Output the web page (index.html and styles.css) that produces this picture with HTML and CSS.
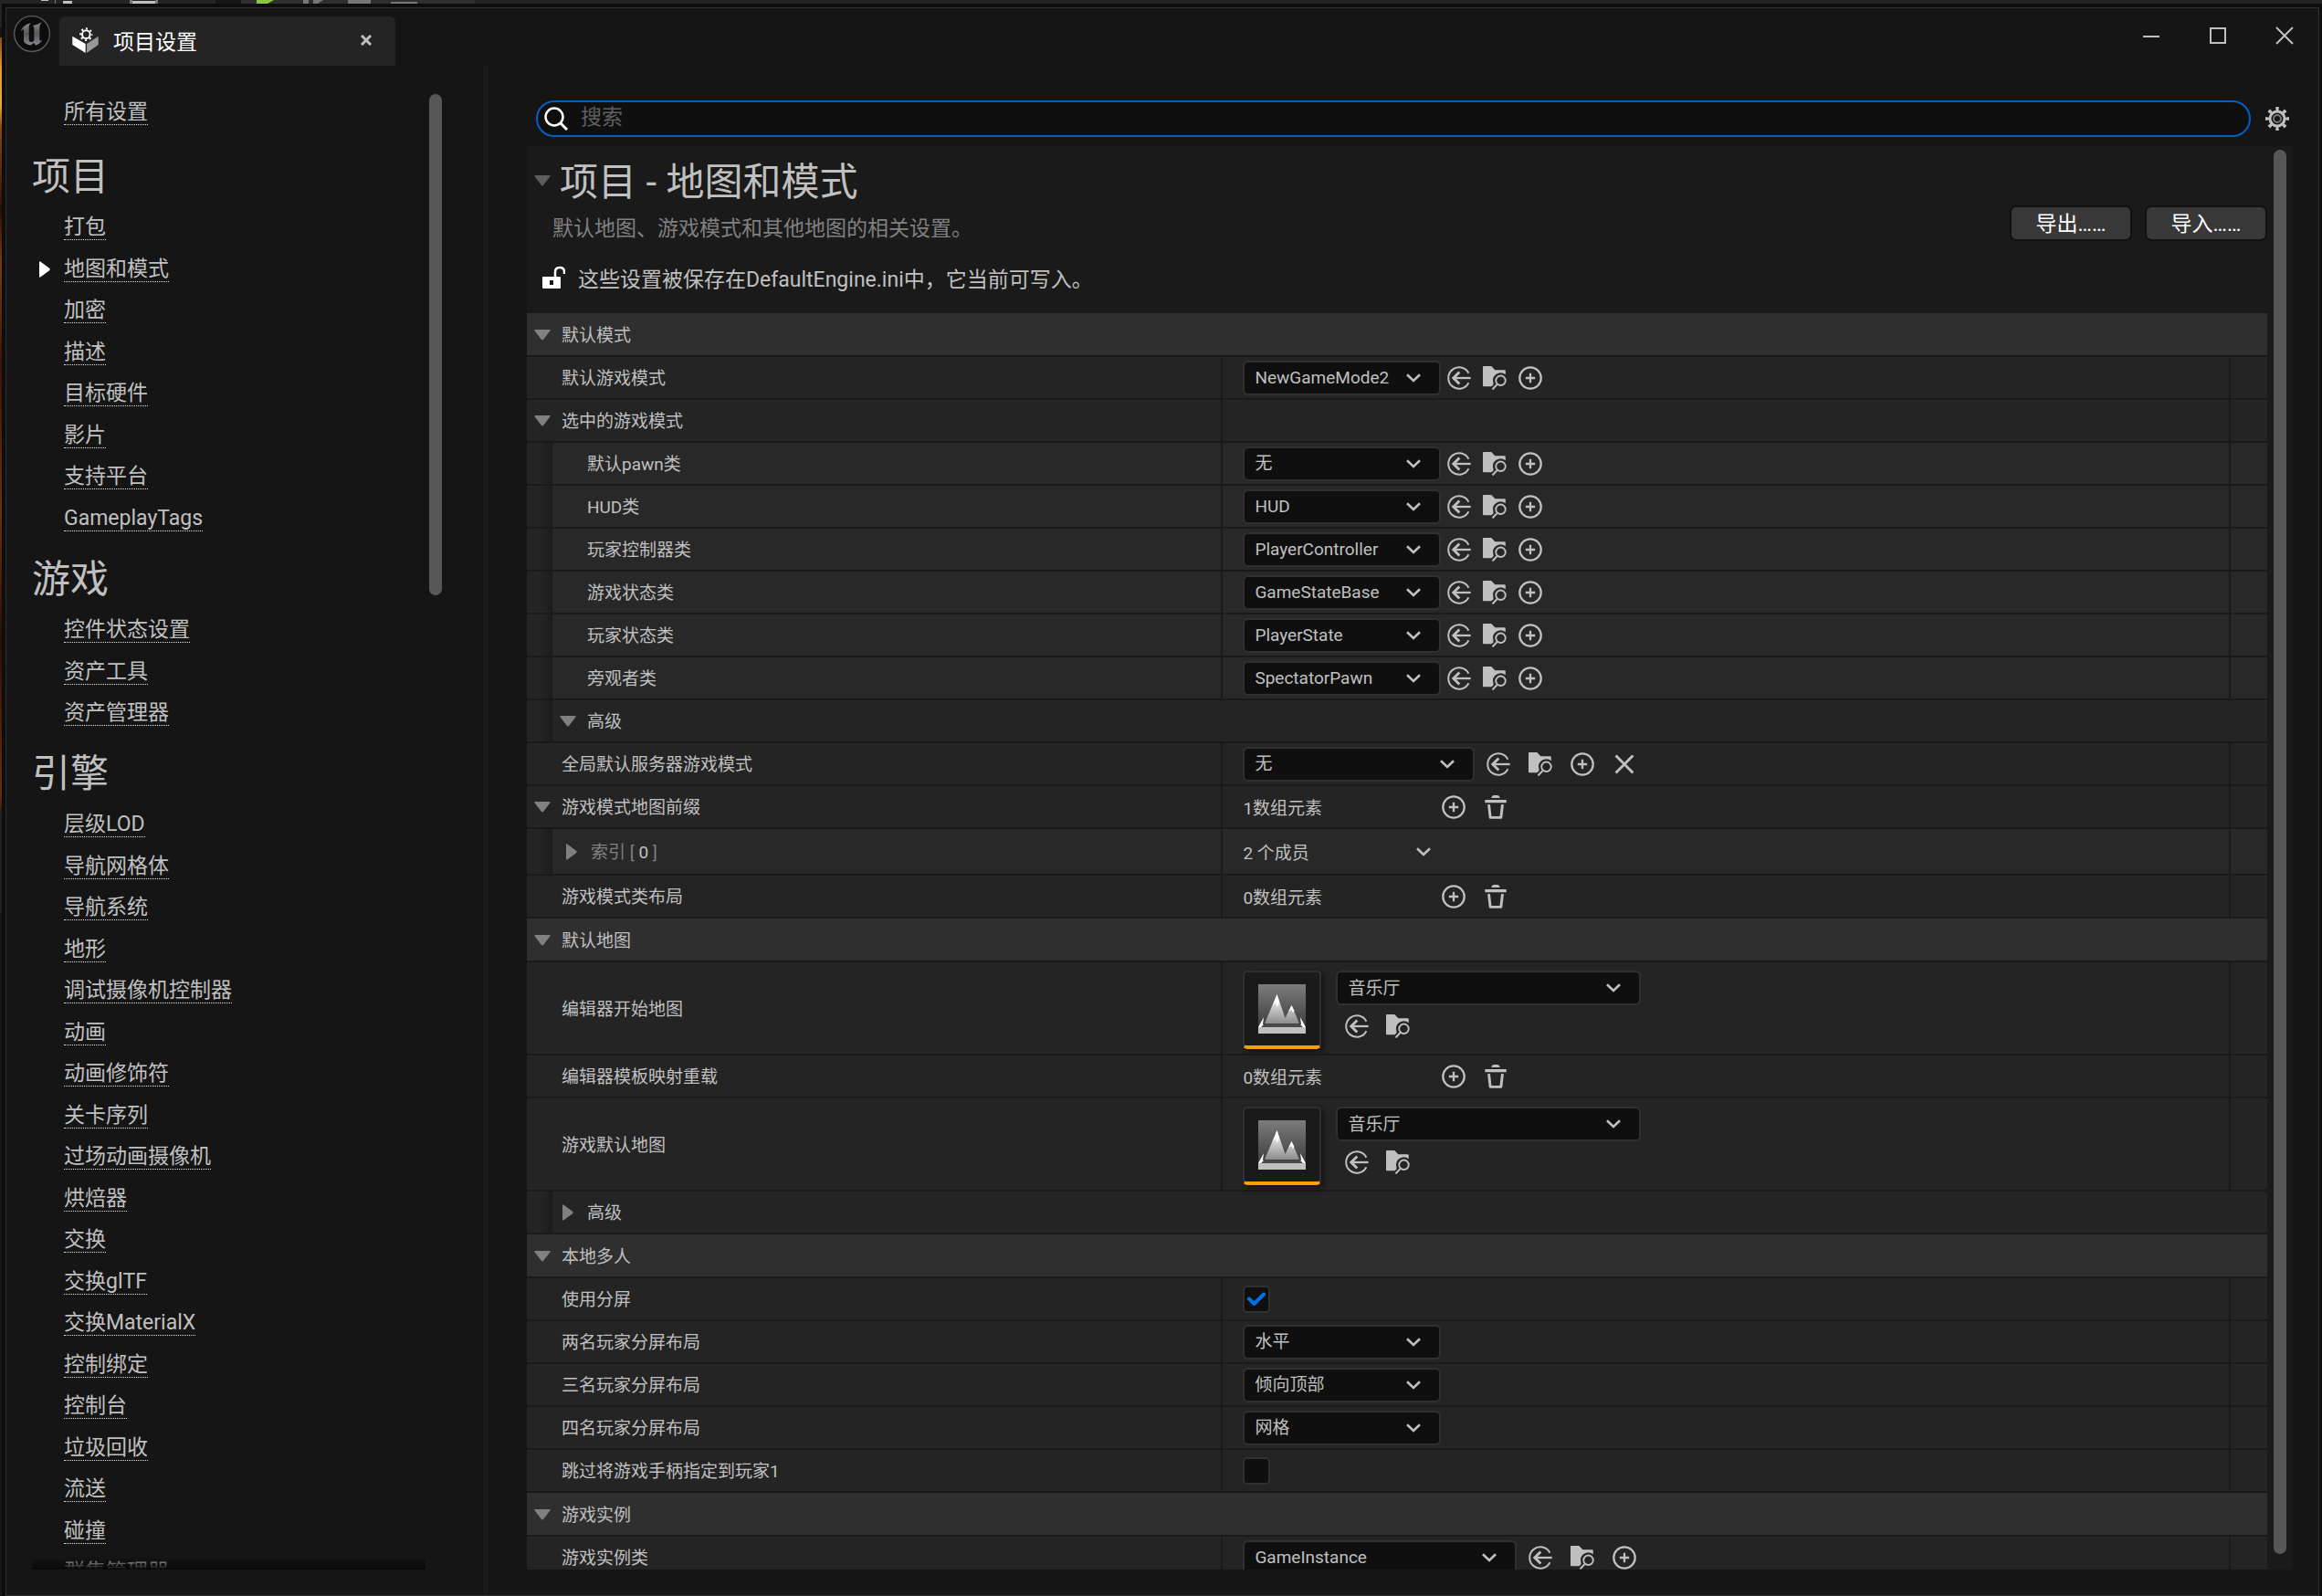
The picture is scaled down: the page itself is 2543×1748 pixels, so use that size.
FILE: index.html
```html
<!DOCTYPE html>
<html lang="zh-CN">
<head>
<meta charset="utf-8">
<title>项目设置</title>
<link rel="stylesheet" href="styles.css">
</head>
<body>
<svg class="defs" aria-hidden="true">
  <symbol id="i-reset" viewBox="0 0 80 80"><path d="M72 24A36 36 0 1 0 72 56" fill="none" stroke="currentColor" stroke-width="6"/><path d="M79 40H24" stroke="currentColor" stroke-width="7"/><path d="M41 20L21 40L41 60" fill="none" stroke="currentColor" stroke-width="9"/></symbol>
  <symbol id="i-browse" viewBox="0 0 84 84"><path d="M3 0H30L43 14H77Q80 14 80 17V30A27 27 0 0 0 37 59V66L30 72H3Q0 72 0 69V3Q0 0 3 0Z" fill="currentColor"/><circle cx="63" cy="51" r="17" fill="none" stroke="currentColor" stroke-width="6"/><path d="M50 65L34 82" stroke="currentColor" stroke-width="7"/></symbol>
  <symbol id="i-add" viewBox="0 0 80 80"><circle cx="40" cy="40" r="36" fill="none" stroke="currentColor" stroke-width="7"/><path d="M40 24V56M24 40H56" stroke="currentColor" stroke-width="7"/></symbol>
  <symbol id="i-trash" viewBox="0 0 80 80"><path d="M4 15H76V25H4ZM25 9Q28 0 34 0H46Q52 0 55 9Z" fill="currentColor"/><path d="M17 31L22 75H58L63 31" fill="none" stroke="currentColor" stroke-width="9" stroke-linejoin="round"/></symbol>
  <symbol id="i-clear" viewBox="0 0 80 80"><path d="M11 11L69 69M69 11L11 69" stroke="currentColor" stroke-width="9"/></symbol>
  <symbol id="i-chevron" viewBox="0 0 16 10"><path d="M1 1.2L8 8L15 1.2" fill="none" stroke="currentColor" stroke-width="2.6"/></symbol>
  <symbol id="i-down" viewBox="0 0 18 12"><path d="M1.5 0H16.5Q18.5 0 17.3 1.6L10.2 10.8Q9 12 7.8 10.8L.7 1.6Q-.5 0 1.5 0Z" fill="currentColor"/></symbol>
  <symbol id="i-right" viewBox="0 0 12 18"><path d="M0 1.5V16.5Q0 18.5 1.6 17.3L11 10.2Q12.4 9 11 7.8L1.6.7Q0-.5 0 1.5Z" fill="currentColor"/></symbol>
  <linearGradient id="g-sky" x2="0" y2="1"><stop offset="0" stop-color="#7c7c7c"/><stop offset="1" stop-color="#3c3c3c"/></linearGradient>
  <linearGradient id="g-peak" x2="0" y2="1"><stop offset="0" stop-color="#ffffff"/><stop offset="1" stop-color="#8c8c8c"/></linearGradient>
  <linearGradient id="g-u" x2="0" y2="1"><stop offset="0" stop-color="#8a8c8e"/><stop offset=".5" stop-color="#55585a"/><stop offset="1" stop-color="#85878a"/></linearGradient>
  <symbol id="i-level" viewBox="0 0 52 54"><path d="M0 0H52V47H0Z" fill="url(#g-sky)"/><path d="M7 43L20.500 11L29.500 37L36.500 23L45 43Z" fill="url(#g-peak)"/><path d="M20.500 11L16 23L19 20L21 25L23 19ZM36.500 23L33 30L36 28L38 31L39.500 29ZM0 47L6 36L5 44H47L46 36L52 47Z" fill="#fff"/><path d="M6 44H46L49 47H3Z" fill="#4a4a4a"/><path d="M0 47H52V54H0Z" fill="#c0c0c0"/></symbol>
</svg>

<svg class="backdrop-top" width="520" height="4" viewBox="0 0 520 4" aria-hidden="true"><path d="M236 0H520V4H236Z" fill="#2f2f2f"/><path d="M0 0H236V4H0Z" fill="#242424"/><path d="M236 0H264V4H236Z" fill="#161616"/><path d="M45 0H53V1H45ZM69 1H79V4H69ZM145 1H170V4H145Z" fill="#c0c0c0"/><path d="M60 0H61V4H60ZM142 0H145V4H142ZM170 0H173V4H170ZM332 0H338V4H332ZM343 0H354L348 4H343ZM381 0H406V4H381ZM428 2H457V4H428Z" fill="#777"/><path d="M281 0H300L293 4H281Z" fill="#8bc63e"/></svg>

<div class="window">
  <header class="titlebar">
    <svg class="logo" viewBox="0 0 120 120" aria-label="Unreal"><circle cx="60" cy="60" r="58" fill="#0c0c0c" stroke="#5c5e60" stroke-width="4"/><path d="M23 52C28 38 40 27 58 25C52 29 50 33 50 38V78C50 84 53 87 58 87C62 87 65 85 67 82V42C67 37 65 35 61 34C72 31 84 28 92 22C87 29 85 33 85 40V78C85 83 88 84 94 80C88 90 80 95 73 98L66 90C60 96 54 99 48 96C38 93 32 88 33 78V48C33 43 29 46 23 52Z" fill="url(#g-u)"/></svg>
    <div class="tab">
      <svg class="tab-icon" viewBox="0 0 85 84" aria-hidden="true"><path d="M0 29L43 54V84L0 57Z" fill="#fff"/><path d="M47 54L85 29V57L47 84Z" fill="#999"/><circle cx="45" cy="23" r="13" fill="none" stroke="#fff" stroke-width="6"/><circle cx="45" cy="23" r="19" fill="none" stroke="#fff" stroke-width="6" pathLength="80" stroke-dasharray="4 6" stroke-dashoffset="2"/></svg>
      <span>项目设置</span>
      <button class="tab-close" aria-label="关闭标签"><svg width="12" height="12" viewBox="0 0 12 12"><path d="M1 1L11 11M11 1L1 11" stroke="currentColor" stroke-width="3"/></svg></button>
    </div>
    <div class="window-buttons">
      <button aria-label="最小化"><svg width="20" height="20" viewBox="0 0 20 20"><path d="M1 11H19" stroke="currentColor" stroke-width="2"/></svg></button>
      <button aria-label="最大化"><svg width="20" height="20" viewBox="0 0 20 20"><path d="M2 2H18V18H2Z" fill="none" stroke="currentColor" stroke-width="2"/></svg></button>
      <button aria-label="关闭"><svg width="20" height="20" viewBox="0 0 20 20"><path d="M1 1L19 19M19 1L1 19" stroke="currentColor" stroke-width="2"/></svg></button>
    </div>
  </header>

  <div class="body">
    <nav class="sidebar">
      <div class="nav-list">
        <ul class="all"><li><a href="#">所有设置</a></li></ul>
        <h2>项目</h2>
        <ul>
          <li><a href="#">打包</a></li>
          <li class="current"><svg class="marker" width="12" height="18"><use href="#i-right"/></svg><a href="#">地图和模式</a></li>
          <li><a href="#">加密</a></li>
          <li><a href="#">描述</a></li>
          <li><a href="#">目标硬件</a></li>
          <li><a href="#">影片</a></li>
          <li><a href="#">支持平台</a></li>
          <li><a href="#">GameplayTags</a></li>
        </ul>
        <h2>游戏</h2>
        <ul>
          <li><a href="#">控件状态设置</a></li>
          <li><a href="#">资产工具</a></li>
          <li><a href="#">资产管理器</a></li>
        </ul>
        <h2>引擎</h2>
        <ul>
          <li><a href="#">层级LOD</a></li>
          <li><a href="#">导航网格体</a></li>
          <li><a href="#">导航系统</a></li>
          <li><a href="#">地形</a></li>
          <li><a href="#">调试摄像机控制器</a></li>
          <li><a href="#">动画</a></li>
          <li><a href="#">动画修饰符</a></li>
          <li><a href="#">关卡序列</a></li>
          <li><a href="#">过场动画摄像机</a></li>
          <li><a href="#">烘焙器</a></li>
          <li><a href="#">交换</a></li>
          <li><a href="#">交换glTF</a></li>
          <li><a href="#">交换MaterialX</a></li>
          <li><a href="#">控制绑定</a></li>
          <li><a href="#">控制台</a></li>
          <li><a href="#">垃圾回收</a></li>
          <li><a href="#">流送</a></li>
          <li><a href="#">碰撞</a></li>
          <li><a href="#">群集管理器</a></li>
        </ul>
      </div>
      <div class="scroll-thumb"></div>
    </nav>
    <div class="splitter"></div>

    <main class="main">
      <div class="search-row">
        <div class="search">
          <svg width="26" height="26" viewBox="0 0 26 26" aria-hidden="true"><circle cx="11" cy="11" r="9.500" fill="none" stroke="#fff" stroke-width="2.500"/><path d="M18 18L25 25" stroke="#fff" stroke-width="3"/></svg>
          <input type="text" placeholder="搜索" aria-label="搜索">
        </div>
        <button class="gear" aria-label="设置"><svg width="26" height="26" viewBox="0 0 26 26"><circle cx="13" cy="13" r="8" fill="none" stroke="currentColor" stroke-width="3"/><circle cx="13" cy="13" r="11" fill="none" stroke="currentColor" stroke-width="4" pathLength="80" stroke-dasharray="4 6" stroke-dashoffset="2"/><circle cx="13" cy="13" r="4" fill="none" stroke="#777" stroke-width="2"/></svg></button>
      </div>

      <div class="panel">
        <div class="content">
          <section class="intro">
            <div class="intro-text">
              <h1><button class="toggle dim" aria-label="折叠"><svg width="18" height="12"><use href="#i-down"/></svg></button>项目 - 地图和模式</h1>
              <p class="desc">默认地图、游戏模式和其他地图的相关设置。</p>
              <p class="save"><svg width="25" height="26" viewBox="0 0 25 26" aria-hidden="true"><path d="M1 12H19Q20 12 20 13V24Q20 25 19 25H2Q0 25 0 24V13Q0 12 1 12ZM8 16V21H12V16Z" fill="#fff" fill-rule="evenodd"/><path d="M14 13V7Q14 2 19 2T24 7V9" fill="none" stroke="#fff" stroke-width="2.500"/></svg>这些设置被保存在DefaultEngine.ini中，它当前可写入。</p>
            </div>
            <div class="intro-actions">
              <button class="btn">导出……</button>
              <button class="btn">导入……</button>
            </div>
          </section>

          <h3 class="category"><button class="toggle" aria-label="折叠"><svg width="18" height="12"><use href="#i-down"/></svg></button>默认模式</h3>
          <div class="row">
            <label class="name" for="f1">默认游戏模式</label>
            <div class="value tight"><span class="combo"><select id="f1"><option>NewGameMode2</option></select><svg><use href="#i-chevron"/></svg></span><button aria-label="使用选中"><svg><use href="#i-reset"/></svg></button><button aria-label="浏览"><svg><use href="#i-browse"/></svg></button><button aria-label="新建"><svg><use href="#i-add"/></svg></button></div>
            <div class="tail"></div>
          </div>
          <div class="row">
            <div class="name"><button class="toggle" aria-label="折叠"><svg width="18" height="12"><use href="#i-down"/></svg></button>选中的游戏模式</div>
            <div class="value"></div>
            <div class="tail"></div>
          </div>
          <div class="row nested">
            <label class="name" for="f2">默认pawn类</label>
            <div class="value tight"><span class="combo"><select id="f2"><option>无</option></select><svg><use href="#i-chevron"/></svg></span><button aria-label="使用选中"><svg><use href="#i-reset"/></svg></button><button aria-label="浏览"><svg><use href="#i-browse"/></svg></button><button aria-label="新建"><svg><use href="#i-add"/></svg></button></div>
            <div class="tail"></div>
          </div>
          <div class="row nested">
            <label class="name" for="f3">HUD类</label>
            <div class="value tight"><span class="combo"><select id="f3"><option>HUD</option></select><svg><use href="#i-chevron"/></svg></span><button aria-label="使用选中"><svg><use href="#i-reset"/></svg></button><button aria-label="浏览"><svg><use href="#i-browse"/></svg></button><button aria-label="新建"><svg><use href="#i-add"/></svg></button></div>
            <div class="tail"></div>
          </div>
          <div class="row nested">
            <label class="name" for="f4">玩家控制器类</label>
            <div class="value tight"><span class="combo"><select id="f4"><option>PlayerController</option></select><svg><use href="#i-chevron"/></svg></span><button aria-label="使用选中"><svg><use href="#i-reset"/></svg></button><button aria-label="浏览"><svg><use href="#i-browse"/></svg></button><button aria-label="新建"><svg><use href="#i-add"/></svg></button></div>
            <div class="tail"></div>
          </div>
          <div class="row nested">
            <label class="name" for="f5">游戏状态类</label>
            <div class="value tight"><span class="combo"><select id="f5"><option>GameStateBase</option></select><svg><use href="#i-chevron"/></svg></span><button aria-label="使用选中"><svg><use href="#i-reset"/></svg></button><button aria-label="浏览"><svg><use href="#i-browse"/></svg></button><button aria-label="新建"><svg><use href="#i-add"/></svg></button></div>
            <div class="tail"></div>
          </div>
          <div class="row nested">
            <label class="name" for="f6">玩家状态类</label>
            <div class="value tight"><span class="combo"><select id="f6"><option>PlayerState</option></select><svg><use href="#i-chevron"/></svg></span><button aria-label="使用选中"><svg><use href="#i-reset"/></svg></button><button aria-label="浏览"><svg><use href="#i-browse"/></svg></button><button aria-label="新建"><svg><use href="#i-add"/></svg></button></div>
            <div class="tail"></div>
          </div>
          <div class="row nested">
            <label class="name" for="f7">旁观者类</label>
            <div class="value tight"><span class="combo"><select id="f7"><option>SpectatorPawn</option></select><svg><use href="#i-chevron"/></svg></span><button aria-label="使用选中"><svg><use href="#i-reset"/></svg></button><button aria-label="浏览"><svg><use href="#i-browse"/></svg></button><button aria-label="新建"><svg><use href="#i-add"/></svg></button></div>
            <div class="tail"></div>
          </div>
          <div class="row nested advanced">
            <div class="name"><button class="toggle" aria-label="折叠"><svg width="18" height="12"><use href="#i-down"/></svg></button>高级</div>
          </div>
          <div class="row">
            <label class="name" for="f8">全局默认服务器游戏模式</label>
            <div class="value"><span class="combo medium"><select id="f8"><option>无</option></select><svg><use href="#i-chevron"/></svg></span><button aria-label="使用选中"><svg><use href="#i-reset"/></svg></button><button aria-label="浏览"><svg><use href="#i-browse"/></svg></button><button aria-label="新建"><svg><use href="#i-add"/></svg></button><button aria-label="清除"><svg><use href="#i-clear"/></svg></button></div>
            <div class="tail"></div>
          </div>
          <div class="row">
            <div class="name"><button class="toggle" aria-label="折叠"><svg width="18" height="12"><use href="#i-down"/></svg></button>游戏模式地图前缀</div>
            <div class="value"><span class="count">1数组元素</span><button aria-label="添加"><svg><use href="#i-add"/></svg></button><button aria-label="清空"><svg><use href="#i-trash"/></svg></button></div>
            <div class="tail"></div>
          </div>
          <div class="row nested tall">
            <div class="name index"><button class="toggle" aria-label="展开"><svg width="12" height="18"><use href="#i-right"/></svg></button><span>索引 [ <b>0</b> ]</span></div>
            <div class="value"><span class="members">2 个成员</span><button class="more" aria-label="更多"><svg><use href="#i-chevron"/></svg></button></div>
            <div class="tail"></div>
          </div>
          <div class="row">
            <div class="name">游戏模式类布局</div>
            <div class="value"><span class="count">0数组元素</span><button aria-label="添加"><svg><use href="#i-add"/></svg></button><button aria-label="清空"><svg><use href="#i-trash"/></svg></button></div>
            <div class="tail"></div>
          </div>

          <h3 class="category"><button class="toggle" aria-label="折叠"><svg width="18" height="12"><use href="#i-down"/></svg></button>默认地图</h3>
          <div class="row asset-row">
            <label class="name" for="f9">编辑器开始地图</label>
            <div class="value"><span class="thumb"><svg width="52" height="54"><use href="#i-level"/></svg></span><div class="asset"><span class="combo wide"><select id="f9"><option>音乐厅</option></select><svg><use href="#i-chevron"/></svg></span><div class="asset-actions"><button aria-label="使用选中"><svg><use href="#i-reset"/></svg></button><button aria-label="浏览"><svg><use href="#i-browse"/></svg></button></div></div></div>
            <div class="tail"></div>
          </div>
          <div class="row">
            <div class="name">编辑器模板映射重载</div>
            <div class="value"><span class="count">0数组元素</span><button aria-label="添加"><svg><use href="#i-add"/></svg></button><button aria-label="清空"><svg><use href="#i-trash"/></svg></button></div>
            <div class="tail"></div>
          </div>
          <div class="row asset-row">
            <label class="name" for="f10">游戏默认地图</label>
            <div class="value"><span class="thumb"><svg width="52" height="54"><use href="#i-level"/></svg></span><div class="asset"><span class="combo wide"><select id="f10"><option>音乐厅</option></select><svg><use href="#i-chevron"/></svg></span><div class="asset-actions"><button aria-label="使用选中"><svg><use href="#i-reset"/></svg></button><button aria-label="浏览"><svg><use href="#i-browse"/></svg></button></div></div></div>
            <div class="tail"></div>
          </div>
          <div class="row nested advanced">
            <div class="name"><button class="toggle" aria-label="展开"><svg width="18" height="18"><use href="#i-right"/></svg></button>高级</div>
          </div>

          <h3 class="category"><button class="toggle" aria-label="折叠"><svg width="18" height="12"><use href="#i-down"/></svg></button>本地多人</h3>
          <div class="row">
            <label class="name" for="f11">使用分屏</label>
            <div class="value"><span class="check"><input type="checkbox" id="f11" checked><svg width="20" height="16" viewBox="0 0 20 16"><path d="M2 7.500L7.500 13L18 2.500" fill="none" stroke="#0070e0" stroke-width="4" stroke-linecap="round" stroke-linejoin="round"/></svg></span></div>
            <div class="tail"></div>
          </div>
          <div class="row">
            <label class="name" for="f12">两名玩家分屏布局</label>
            <div class="value"><span class="combo"><select id="f12"><option>水平</option></select><svg><use href="#i-chevron"/></svg></span></div>
            <div class="tail"></div>
          </div>
          <div class="row">
            <label class="name" for="f13">三名玩家分屏布局</label>
            <div class="value"><span class="combo"><select id="f13"><option>倾向顶部</option></select><svg><use href="#i-chevron"/></svg></span></div>
            <div class="tail"></div>
          </div>
          <div class="row">
            <label class="name" for="f14">四名玩家分屏布局</label>
            <div class="value"><span class="combo"><select id="f14"><option>网格</option></select><svg><use href="#i-chevron"/></svg></span></div>
            <div class="tail"></div>
          </div>
          <div class="row">
            <label class="name" for="f15">跳过将游戏手柄指定到玩家1</label>
            <div class="value"><span class="check"><input type="checkbox" id="f15"></span></div>
            <div class="tail"></div>
          </div>

          <h3 class="category"><button class="toggle" aria-label="折叠"><svg width="18" height="12"><use href="#i-down"/></svg></button>游戏实例</h3>
          <div class="row">
            <label class="name" for="f16">游戏实例类</label>
            <div class="value"><span class="combo large"><select id="f16"><option>GameInstance</option></select><svg><use href="#i-chevron"/></svg></span><button aria-label="使用选中"><svg><use href="#i-reset"/></svg></button><button aria-label="浏览"><svg><use href="#i-browse"/></svg></button><button aria-label="新建"><svg><use href="#i-add"/></svg></button></div>
            <div class="tail"></div>
          </div>
        </div>
        <div class="scroll-track"><div class="scroll-thumb"></div></div>
      </div>
    </main>
  </div>
</div>
</body>
</html>
```
FILE: styles.css
```css
* {
  box-sizing: border-box;
}

html {
  height: 100%;
}

body {
  height: 100%;
  margin: 0;
  padding: 4px 0 0 2px;
  overflow: hidden;
  background: linear-gradient(#242424 0 30px, #141414 30px 41px, #8a4a14 41px, #e09a30 75px, #e8a840 115px, #8a4510 140px, #2c1004 230px, #7a3a0c 290px, #3a1404 400px, #6a300a 560px, #2a1006 700px, #6a2c0a 870px, #202020 890px 1000px, #161616 1000px);
  color: #c0c0c0;
  font-family: Roboto, "Noto Sans CJK SC", sans-serif;
  font-size: 19px;
}

button {
  display: flex;
  align-items: center;
  justify-content: center;
  margin: 0;
  padding: 0;
  border: 0;
  background: none;
  color: inherit;
  font: inherit;
}

.defs {
  position: absolute;
  width: 0;
  height: 0;
}

.backdrop-top {
  position: absolute;
  top: 0;
  left: 0;
}

/* Window frame */
.window {
  display: flex;
  flex-direction: column;
  height: 100%;
  border: solid #0d0d0d;
  border-width: 4px 3px 0 4px;
  background: #151515;
  box-shadow: inset 0 0 0 1px #303030;
}

.titlebar {
  display: flex;
  align-items: flex-start;
  height: 64px;
  padding: 9px 28px 0 9px;
}

.logo {
  width: 40px;
  height: 40px;
}

.tab {
  display: flex;
  align-items: center;
  gap: 16px;
  width: 368px;
  height: 54px;
  margin: 1px 0 0 10px;
  padding: 0 26px 2px 14px;
  border-radius: 6px 6px 0 0;
  background: #242424;
  color: #fff;
  font-size: 23px;
}

.tab-icon {
  width: 29px;
  height: 28px;
}

.tab-close {
  margin-left: auto;
  color: #c0c0c0;
}

.window-buttons {
  display: flex;
  gap: 53px;
  margin: 12px 0 0 auto;
}

.body {
  display: flex;
  flex: 1;
  min-height: 0;
  padding-bottom: 1px;
}

/* Category navigation */
.sidebar {
  position: relative;
  display: flex;
  width: 523px;
  padding: 31px 45px 28px 29px;
}

.nav-list {
  flex: 1;
  margin-top: -2px;
  overflow: hidden;
}

.sidebar::after {
  content: "";
  position: absolute;
  left: 29px;
  right: 63px;
  bottom: 28px;
  height: 14px;
  background: linear-gradient(transparent, #080808);
}

.nav-list ul {
  margin: 0;
  padding: 0 0 0 35px;
  list-style: none;
}

.nav-list .all {
  margin-bottom: 4px;
}

.nav-list li {
  position: relative;
  display: flex;
  align-items: center;
  height: 45px;
}

.nav-list li:nth-child(even) {
  height: 46px;
}

.nav-list a {
  border-bottom: 1px dotted #e0e0e0;
  color: inherit;
  font-size: 23px;
  line-height: 26px;
  text-decoration: none;
}

.marker {
  position: absolute;
  left: -27px;
  color: #fff;
}

.nav-list h2 {
  height: 77px;
  margin: 0;
  font-size: 42px;
  font-weight: 400;
  line-height: 88px;
}

.scroll-thumb {
  width: 14px;
  border-radius: 7px;
  background: #575757;
}

.sidebar .scroll-thumb {
  height: 34%;
}

.splitter {
  width: 6px;
  background: #1a1a1a;
}

/* Search */
.main {
  display: flex;
  flex: 1;
  flex-direction: column;
  min-width: 0;
  padding: 38px 29px 28px 42px;
}

.search-row {
  display: flex;
  align-items: center;
  gap: 16px;
  height: 40px;
  margin: 0 4px 10px 10px;
}

.search {
  display: flex;
  flex: 1;
  align-items: center;
  gap: 14px;
  height: 40px;
  padding: 0 7px;
  border: 2px solid #0060c4;
  border-radius: 20px;
  background: #0f0f0f;
}

.search input {
  flex: 1;
  padding: 0 0 3px;
  border: 0;
  outline: 0;
  background: none;
  color: #c0c0c0;
  font: inherit;
  font-size: 23px;
}

.search input::placeholder {
  color: #606060;
  opacity: 1;
}

/* Details panel */
.panel {
  display: flex;
  flex: 1;
  min-height: 0;
  background: #1a1a1a;
}

.content {
  flex: 1;
  overflow: hidden;
}

.scroll-track {
  display: flex;
  width: 28px;
  padding: 4px 7px 17px;
}

.intro {
  display: flex;
  align-items: flex-start;
  justify-content: space-between;
  height: 183px;
}

.intro h1 {
  display: flex;
  align-items: center;
  gap: 10px;
  height: 48px;
  margin: 11px 0 0 8px;
  font-size: 42px;
  font-weight: 400;
}

.intro h1 .toggle {
  padding-top: 6px;
}

.intro p {
  display: flex;
  align-items: center;
  height: 30px;
  margin: 0;
  font-size: 23px;
}

.intro .desc {
  margin: 14px 0 26px 28px;
  color: #808080;
}

.intro .save {
  margin-left: 17px;
}

.save svg {
  margin-right: 14px;
}

.intro-actions {
  display: flex;
  gap: 14px;
  padding-top: 65px;
}

.btn {
  width: 134px;
  height: 39px;
  padding-bottom: 3px;
  border: 2px solid #111;
  border-radius: 7px;
  background: #383838;
  color: #fff;
  font-size: 23px;
}

.category {
  display: flex;
  align-items: center;
  gap: 12px;
  height: 48px;
  margin: 0;
  padding: 0 0 2px 8px;
  border-bottom: 2px solid #1a1a1a;
  background: #2f2f2f;
  font-size: 19px;
  font-weight: 400;
}

.toggle {
  padding-top: 3px;
  color: #808080;
}

.toggle.dim {
  color: #5c5c5c;
}

.row {
  display: grid;
  grid-template-columns: 40% 1fr 40px;
  height: 47px;
  border-bottom: 2px solid #1a1a1a;
  background: #242424;
}

.row.nested {
  background: linear-gradient(to right, #242424 17px, #1b1b1b 28px, #282828 28px);
}

.row.advanced {
  grid-template-columns: 1fr;
  background: linear-gradient(to right, #242424 17px, #1b1b1b 28px, #242424 28px);
}

.row.tall {
  height: 51px;
}

.row.asset-row {
  height: 102px;
}

.name {
  display: flex;
  align-items: center;
  gap: 12px;
  padding: 0 0 2px 38px;
  border-right: 2px solid #1a1a1a;
}

.name:has(.toggle) {
  padding-left: 8px;
}

.nested .name {
  padding-left: 66px;
}

.nested .name:has(.toggle) {
  padding-left: 36px;
}

.advanced .name {
  border-right: 0;
}

.nested .index:has(.toggle) {
  gap: 15px;
  padding-left: 43px;
  color: #808080;
}

.index b {
  color: #c0c0c0;
  font-weight: 400;
}

.value {
  display: flex;
  align-items: center;
  gap: 20px;
  padding-left: 22px;
  border-right: 2px solid #1a1a1a;
}

.value.tight {
  gap: 13px;
}

.value button svg {
  width: 26px;
  height: 26px;
}

.value .combo + button {
  margin-left: -7px;
}

.value.tight .combo + button {
  margin-left: -6px;
}

.combo {
  display: grid;
  align-items: center;
  width: 217px;
  height: 38px;
}

.combo.medium {
  width: 254px;
}

.combo.large {
  width: 300px;
}

.combo.wide {
  width: 334px;
}

.combo > * {
  grid-area: 1 / 1;
}

.combo select {
  width: 100%;
  height: 38px;
  padding: 0 40px 0 11px;
  border: 2px solid #303030;
  border-radius: 6px;
  appearance: none;
  background: #0f0f0f;
  color: #c0c0c0;
  font: inherit;
}

.combo svg {
  justify-self: end;
  width: 16px;
  height: 10px;
  margin-right: 22px;
  pointer-events: none;
}

.count {
  width: 198px;
}

.members {
  width: 170px;
}

.value .more svg {
  width: 16px;
  height: 10px;
}

.asset-row .value {
  align-items: flex-start;
  padding-top: 9px;
}

.thumb {
  display: flex;
  justify-content: center;
  width: 86px;
  height: 86px;
  margin-right: -4px;
  padding-top: 13px;
  border: 2px solid #303030;
  border-bottom: 4px solid #ff9c00;
  border-radius: 5px;
  background: #1a1a1a;
  box-shadow: 3px 3px 5px #141414;
}

.asset {
  display: flex;
  flex-direction: column;
  gap: 10px;
}

.asset-actions {
  display: flex;
  gap: 19px;
  padding-left: 10px;
}

.check {
  display: grid;
  place-items: center;
}

.check > * {
  grid-area: 1 / 1;
}

.check input {
  width: 30px;
  height: 30px;
  margin: 0;
  border: 2px solid #303030;
  border-radius: 5px;
  appearance: none;
  background: #0f0f0f;
}

.check svg {
  pointer-events: none;
}
```
